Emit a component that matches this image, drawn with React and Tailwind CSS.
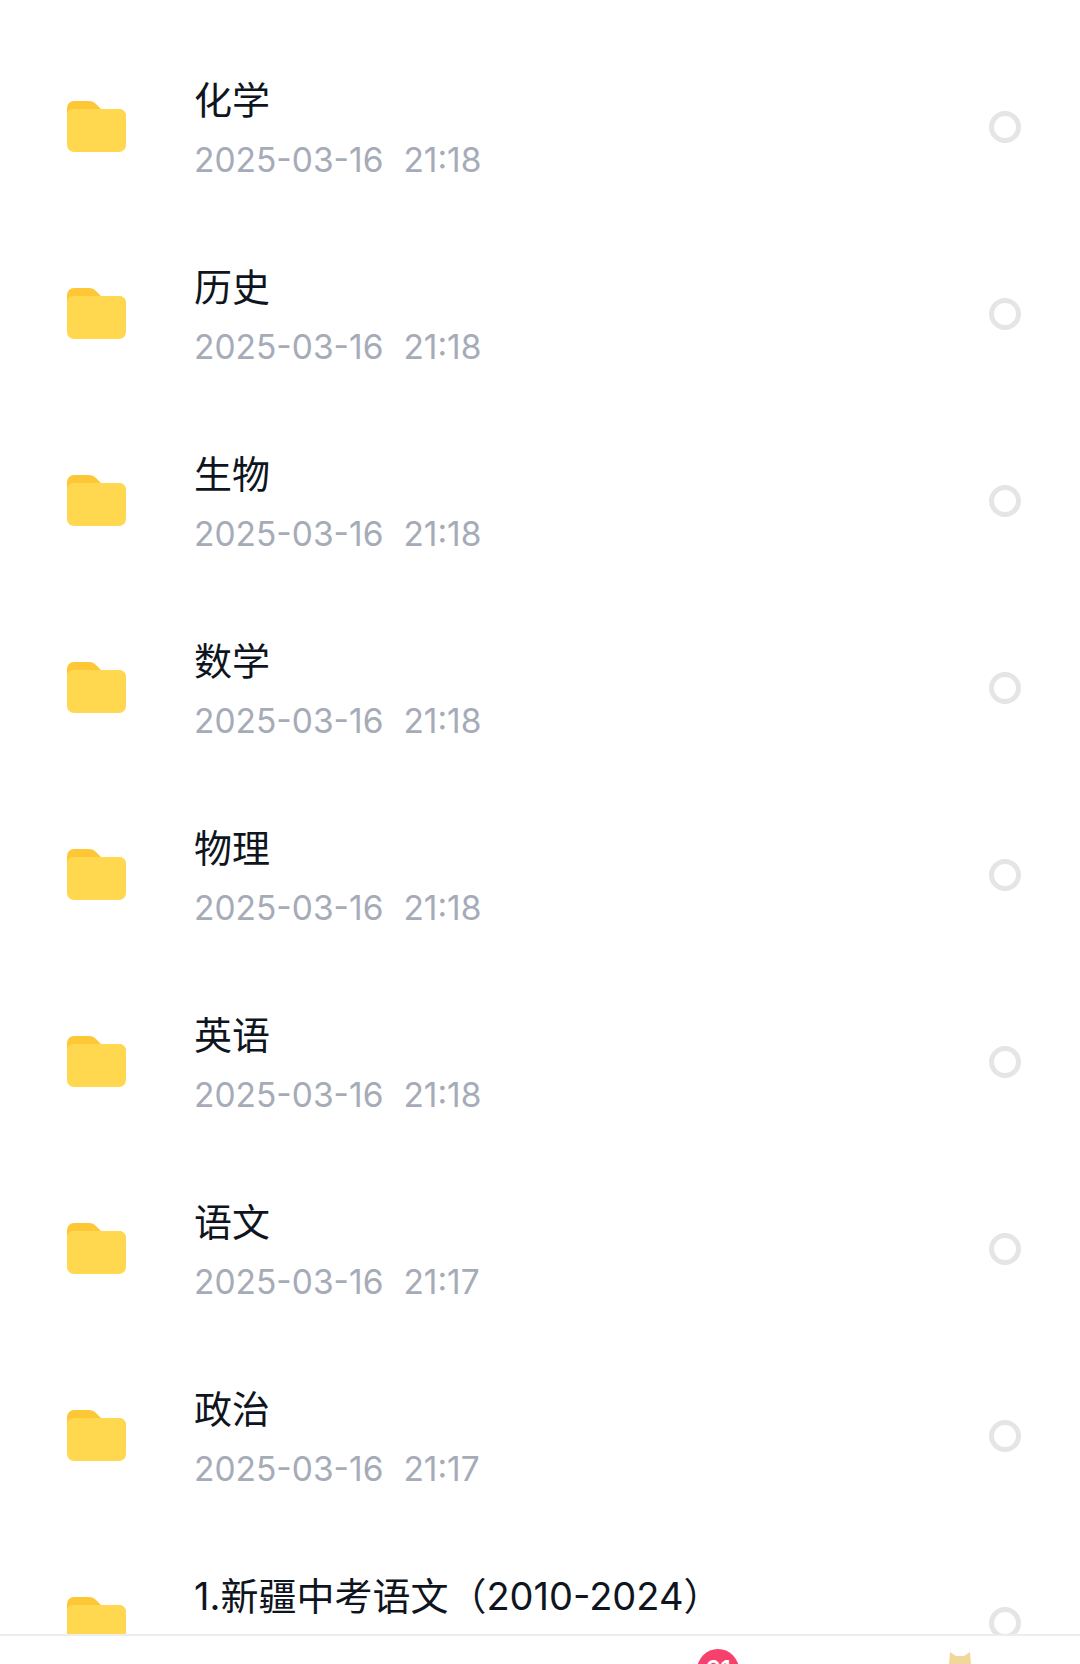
const rows = [
  ["化学", "21:18"],
  ["历史", "21:18"],
  ["生物", "21:18"],
  ["数学", "21:18"],
  ["物理", "21:18"],
  ["英语", "21:18"],
  ["语文", "21:17"],
  ["政治", "21:17"],
  ["1.新疆中考语文（2010-2024）", "21:17"],
];

function Folder() {
  return (
    <svg width="59" height="51" viewBox="0 0 59 51" className="shrink-0">
      <path d="M0 7a7 7 0 0 1 7-7h15c3 0 5 1 7 3l5 5h18a7 7 0 0 1 7 7v10H0z" fill="#fdc735" />
      <path d="M0 14a6 6 0 0 1 6-6h46a7 7 0 0 1 7 7v29a7 7 0 0 1-7 7H7a7 7 0 0 1-7-7z" fill="#ffd850" />
    </svg>
  );
}

export default function App() {
  return (
    <div className="h-[1664px] w-[1080px] flex flex-col bg-white overflow-hidden font-['Inter','Noto_Sans_CJK_SC',sans-serif]">
      <div className="flex-1 min-h-0 overflow-hidden pt-[33px]">
        {rows.map(([name, time]) => (
          <div key={name} className="h-[187px] flex items-center pl-[67px] pr-[59px]">
            <Folder />
            <div className="ml-[68px] flex-1 min-w-0 pt-[4px]">
              <div className="text-[38px] leading-[50px] text-[#0f1520] whitespace-nowrap">{name}</div>
              <div className="mt-[12px] text-[33.5px] leading-[46px] text-[#a6abb8] flex gap-[20px]">
                <span>2025-03-16</span>
                <span>{time}</span>
              </div>
            </div>
            <div className="w-[32px] h-[32px] rounded-full border-[5px] border-[#e5e5e5] shrink-0" />
          </div>
        ))}
      </div>
      <div className="relative h-[30px] shrink-0 bg-white border-t-2 border-[#ededed]">
        <div className="absolute left-[697px] top-[13px] w-[42px] h-[42px] rounded-full bg-[#f6416c] text-white text-[24px] font-semibold text-center leading-[42px]">61</div>
        <svg className="absolute left-[949px] top-[16px]" width="22" height="12" viewBox="0 0 22 12">
          <path d="M1 0l6 4h8l6-4 1 12H0z" fill="#f2d79d" />
        </svg>
      </div>
    </div>
  );
}
